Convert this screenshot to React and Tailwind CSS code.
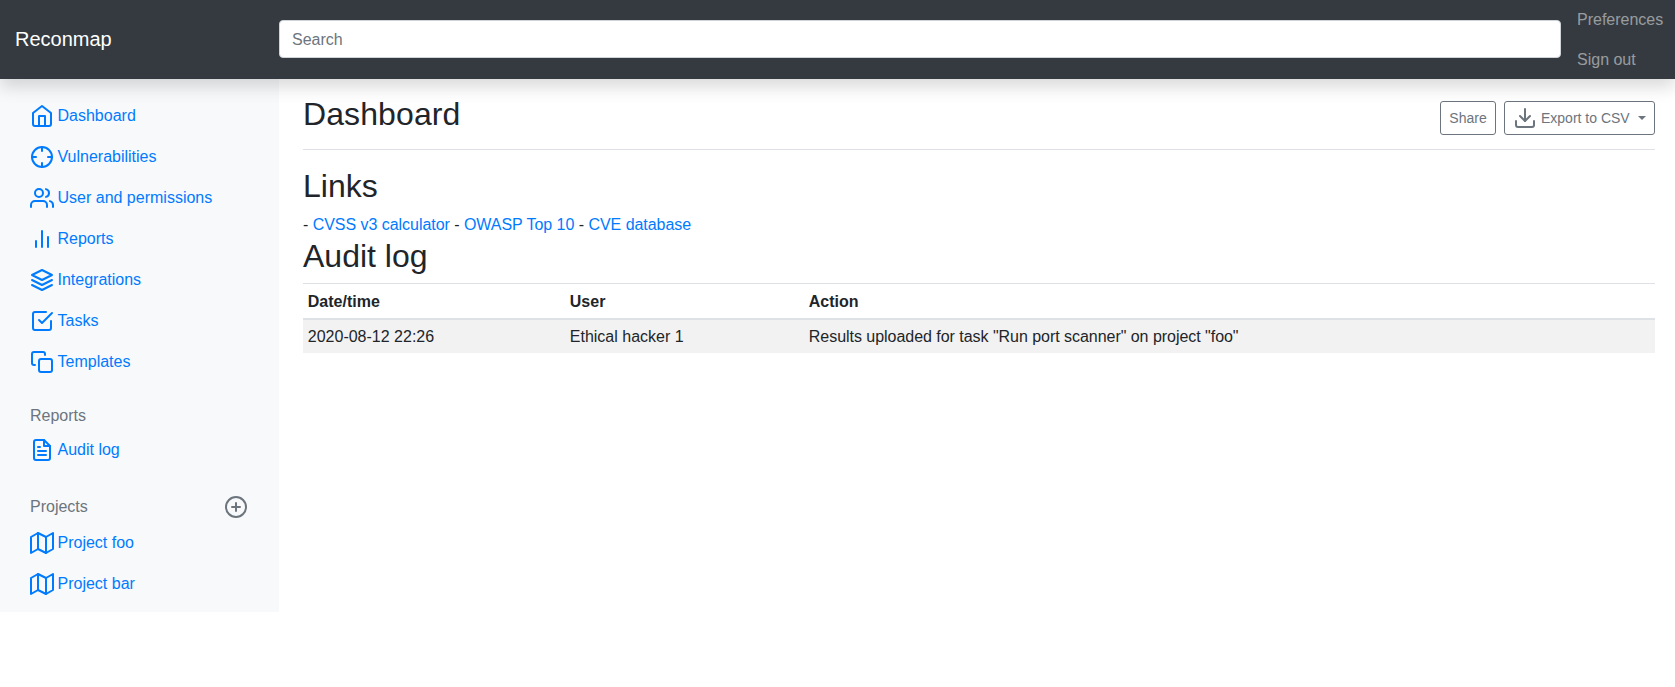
const paths = {
  home: <><path d="M3 9l9-7 9 7v11a2 2 0 0 1-2 2H5a2 2 0 0 1-2-2z" /><polyline points="9 22 9 12 15 12 15 22" /></>,
  crosshair: <><circle cx="12" cy="12" r="10" /><line x1="22" y1="12" x2="18" y2="12" /><line x1="6" y1="12" x2="2" y2="12" /><line x1="12" y1="6" x2="12" y2="2" /><line x1="12" y1="22" x2="12" y2="18" /></>,
  users: <><path d="M17 21v-2a4 4 0 0 0-4-4H5a4 4 0 0 0-4 4v2" /><circle cx="9" cy="7" r="4" /><path d="M23 21v-2a4 4 0 0 0-3-3.87" /><path d="M16 3.13a4 4 0 0 1 0 7.75" /></>,
  bar: <><line x1="18" y1="20" x2="18" y2="10" /><line x1="12" y1="20" x2="12" y2="4" /><line x1="6" y1="20" x2="6" y2="14" /></>,
  layers: <><polygon points="12 2 2 7 12 12 22 7 12 2" /><polyline points="2 17 12 22 22 17" /><polyline points="2 12 12 17 22 12" /></>,
  check: <><polyline points="9 11 12 14 22 4" /><path d="M21 12v7a2 2 0 0 1-2 2H5a2 2 0 0 1-2-2V5a2 2 0 0 1 2-2h11" /></>,
  copy: <><rect x="9" y="9" width="13" height="13" rx="2" ry="2" /><path d="M5 15H4a2 2 0 0 1-2-2V4a2 2 0 0 1 2-2h9a2 2 0 0 1 2 2v1" /></>,
  file: <><path d="M14 2H6a2 2 0 0 0-2 2v16a2 2 0 0 0 2 2h12a2 2 0 0 0 2-2V8z" /><polyline points="14 2 14 8 20 8" /><line x1="16" y1="13" x2="8" y2="13" /><line x1="16" y1="17" x2="8" y2="17" /><polyline points="10 9 9 9 8 9" /></>,
  plus: <><circle cx="12" cy="12" r="10" /><line x1="12" y1="8" x2="12" y2="16" /><line x1="8" y1="12" x2="16" y2="12" /></>,
  map: <><polygon points="1 6 1 22 8 18 16 22 23 18 23 2 16 6 8 2 1 6" /><line x1="8" y1="2" x2="8" y2="18" /><line x1="16" y1="6" x2="16" y2="22" /></>,
  download: <><path d="M21 15v4a2 2 0 0 1-2 2H5a2 2 0 0 1-2-2v-4" /><polyline points="7 10 12 15 17 10" /><line x1="12" y1="15" x2="12" y2="3" /></>,
};

function Icon({ name, className = "" }) {
  return (
    <svg viewBox="0 0 24 24" fill="none" stroke="currentColor" strokeWidth="2" strokeLinecap="round" strokeLinejoin="round" className={`w-6 h-6 shrink-0 ${className}`}>
      {paths[name]}
    </svg>
  );
}

function NavItem({ icon, children }) {
  return (
    <a href="#" className="flex items-center h-[41px] pl-[30px] text-[#007bff]">
      <Icon name={icon} />
      <span className="ml-[3.5px]">{children}</span>
    </a>
  );
}

export default function App() {
  return (
    <div className="font-['Liberation_Sans',Arial,sans-serif] text-[16px] leading-6 text-[#212529] bg-white min-h-[687px]">
      <nav className="relative z-10 flex items-center h-[79px] bg-[#343a40] shadow-[0_8px_16px_rgba(0,0,0,0.15)]">
        <a href="#" className="w-[279px] shrink-0 pl-[15px] mb-[1px] text-[20px] leading-[30px] text-white">Reconmap</a>
        <input placeholder="Search" className="flex-1 min-w-0 h-[38px] mb-[1px] px-3 pt-[2px] bg-white border border-[#ced4da] rounded-[4px] text-[16px] placeholder:text-[#6c757d] outline-none" />
        <div className="w-[114px] shrink-0 pl-4 flex flex-col">
          <a href="#" className="h-[40px] flex items-center text-white/50 whitespace-nowrap">Preferences</a>
          <a href="#" className="h-[39px] flex items-center text-white/50 whitespace-nowrap">Sign out</a>
        </div>
      </nav>
      <div className="flex">
        <aside className="w-[279px] shrink-0 h-[533px] bg-[#f8f9fa] pt-4">
          <NavItem icon="home">Dashboard</NavItem>
          <NavItem icon="crosshair">Vulnerabilities</NavItem>
          <NavItem icon="users">User and permissions</NavItem>
          <NavItem icon="bar">Reports</NavItem>
          <NavItem icon="layers">Integrations</NavItem>
          <NavItem icon="check">Tasks</NavItem>
          <NavItem icon="copy">Templates</NavItem>
          <h6 className="mt-[22px] pl-[30px] h-[25px] text-[#6c757d] font-normal">Reports</h6>
          <NavItem icon="file">Audit log</NavItem>
          <div className="flex items-center justify-between mt-[22px] pl-[30px] pr-[31px] h-[30px] text-[#6c757d]">
            <span>Projects</span>
            <Icon name="plus" />
          </div>
          <NavItem icon="map">Project foo</NavItem>
          <NavItem icon="map">Project bar</NavItem>
        </aside>
        <main className="flex-1 min-w-0 pl-6 pr-5">
          <div className="flex items-center justify-between h-[71px] border-b border-[#dee2e6]">
            <h1 className="text-[32px] leading-[38px] font-normal -mt-[1px] tracking-[0.1px]">Dashboard</h1>
            <div className="flex items-center gap-2 mt-[8px]">
              <button className="w-[56px] h-[34px] border border-[#6c757d] rounded-[3px] text-[14px] text-[#6c757d]">Share</button>
              <button className="w-[151px] h-[34px] pl-[8px] flex items-center border border-[#6c757d] rounded-[3px] text-[14px] text-[#6c757d]">
                <Icon name="download" />
                <span className="ml-[4px] -mt-[1px]">Export to CSV</span>
                <span className="ml-[8px] w-0 h-0 border-x-[4.2px] border-x-transparent border-t-[4.2px] border-t-[#6c757d]" />
              </button>
            </div>
          </div>
          <h2 className="mt-[17px] text-[32px] leading-[38px] font-normal">Links</h2>
          <p className="mt-[8px] tracking-[-0.04px]">
            - <a href="#" className="text-[#007bff]">CVSS v3 calculator</a> - <a href="#" className="text-[#007bff]">OWASP Top 10</a> - <a href="#" className="text-[#007bff]">CVE database</a>
          </p>
          <h2 className="text-[32px] leading-[38px] font-normal">Audit log</h2>
          <table className="w-full mt-[8px] border-collapse text-left">
            <thead>
              <tr className="border-t border-b-2 border-[#dee2e6]">
                <th className="w-[262px] px-[4.8px] pt-[5.8px] pb-[3.8px] font-bold">Date/time</th>
                <th className="w-[239px] px-[4.8px] pt-[5.8px] pb-[3.8px] font-bold">User</th>
                <th className="px-[4.8px] pt-[5.8px] pb-[3.8px] font-bold">Action</th>
              </tr>
            </thead>
            <tbody>
              <tr className="bg-[#f2f2f2]">
                <td className="px-[4.8px] pt-[5.8px] pb-[3.8px]">2020-08-12 22:26</td>
                <td className="px-[4.8px] pt-[5.8px] pb-[3.8px]">Ethical hacker 1</td>
                <td className="px-[4.8px] pt-[5.8px] pb-[3.8px] tracking-[-0.035px]">Results uploaded for task "Run port scanner" on project "foo"</td>
              </tr>
            </tbody>
          </table>
        </main>
      </div>
    </div>
  );
}
